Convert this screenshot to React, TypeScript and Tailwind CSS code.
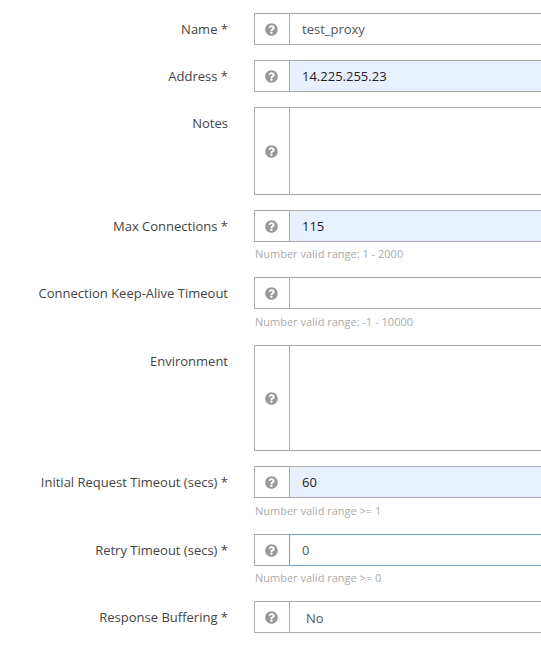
import { FaQuestionCircle } from "react-icons/fa";

type RowProps = {
  label: string;
  value?: string;
  hint?: string;
  hintBox?: string;
  inputHeight?: string;
  tone?: "plain" | "filled" | "focus";
  select?: boolean;
};

function Row({ label, value = "", hint, hintBox = "mt-[3px] h-[18px]", inputHeight = "h-[32px]", tone = "plain", select }: RowProps) {
  const border = tone === "focus" ? "border-[#6ea5cf]" : "border-[#aaaaaa]";
  const bg = tone === "filled" ? "bg-[#e8f0fe] text-[#222222]" : "bg-white text-[#555555]";
  return (
    <div className="flex items-start">
      <div className="w-[228px] shrink-0 pt-[7px] text-right text-[13px] leading-[18px] text-[#444444]">{label}</div>
      <div className="ml-[26px] w-[400px] shrink-0">
        <div className={`flex ${inputHeight}`}>
          <div className="flex w-[36px] shrink-0 items-center justify-center border border-[#aaaaaa] bg-white pr-[2px]">
            <FaQuestionCircle className="text-[13px] text-[#999999]" />
          </div>
          <div
            className={`-ml-px flex flex-1 items-center border ${border} ${bg} text-[13px] ${select ? "pl-[16px] pt-[3px]" : "pl-[12px] pt-[2px]"}`}
          >
            {value}
          </div>
        </div>
        {hint && <div className={`${hintBox} pl-px text-[11px] leading-[18px] text-[#aaaaaa]`}>{hint}</div>}
      </div>
    </div>
  );
}

export default function App() {
  return (
    <div className="h-[660px] w-[541px] overflow-hidden bg-white font-['Open_Sans',sans-serif]">
      <div className="flex flex-col pt-[13px]">
        <div className="flex flex-col gap-[15px]">
          <Row label="Name *" value="test_proxy" />
          <Row label="Address *" value="14.225.255.23" tone="filled" />
          <Row label="Notes" inputHeight="h-[88px]" />
          <Row label="Max Connections *" value="115" tone="filled" hint="Number valid range: 1 - 2000" />
        </div>
        <div className="mt-[14px] flex flex-col gap-[15px]">
          <Row label="Connection Keep-Alive Timeout" hint="Number valid range: -1 - 10000" hintBox="mt-[4px] h-[17px]" />
          <Row label="Environment" inputHeight="h-[106px]" />
        </div>
        <div className="mt-[15px] flex flex-col gap-[15px]">
          <Row label="Initial Request Timeout (secs) *" value="60" tone="filled" hint="Number valid range >= 1" hintBox="mt-[4px] h-[17px]" />
          <Row label="Retry Timeout (secs) *" value="0" tone="focus" hint="Number valid range >= 0" hintBox="mt-[3px] h-[17px]" />
          <Row label="Response Buffering *" value="No" select />
        </div>
      </div>
    </div>
  );
}
